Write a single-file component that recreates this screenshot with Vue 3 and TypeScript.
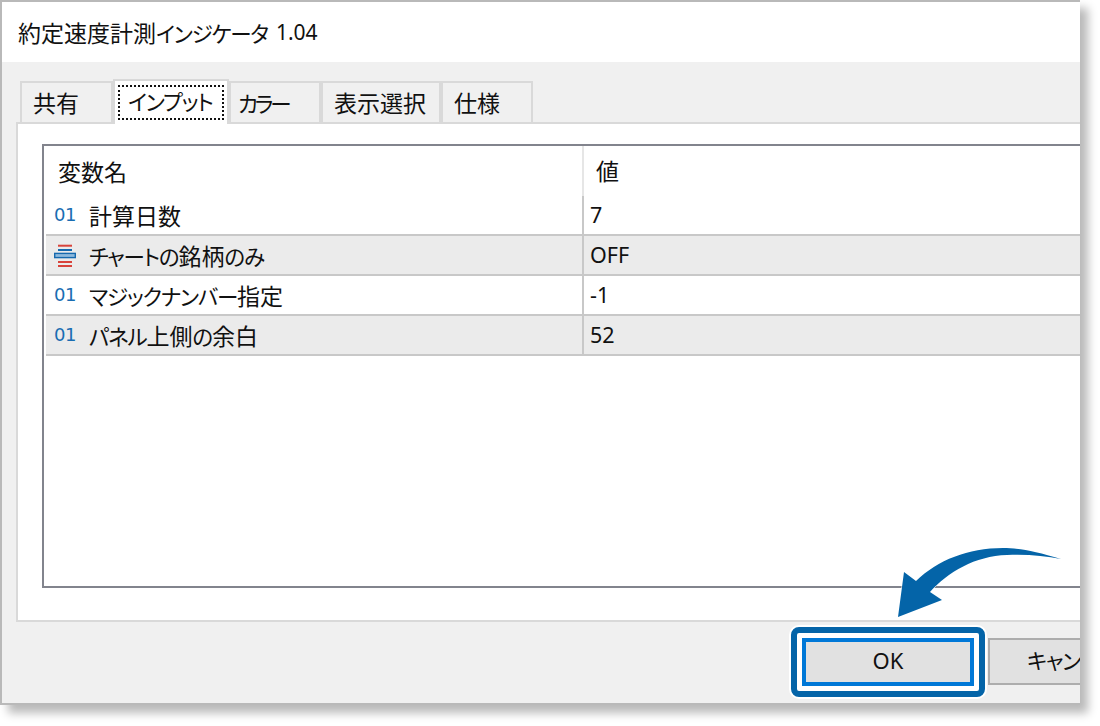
<script setup lang="ts">
interface Row { icon: 'num' | 'enum'; name: string; value: string }
interface Run { text: string; kana: boolean }

const splitRuns = (s: string): Run[] =>
  (s.match(/[\u3040-\u30ff]+|[^\u3040-\u30ff]+/g) ?? []).map((text) => ({
    text,
    kana: /[\u3040-\u30ff]/.test(text),
  }))

const tabs = [
  { label: '共有', w: 93, active: false, tight: false },
  { label: 'インプット', w: 116, active: true, tight: false },
  { label: 'カラー', w: 92, active: false, tight: true },
  { label: '表示選択', w: 120, active: false, tight: false },
  { label: '仕様', w: 92, active: false, tight: false },
].map((t) => ({ ...t, runs: splitRuns(t.label) }))

const rows: Row[] = [
  { icon: 'num', name: '計算日数', value: '7' },
  { icon: 'enum', name: 'チャートの銘柄のみ', value: 'OFF' },
  { icon: 'num', name: 'マジックナンバー指定', value: '-1' },
  { icon: 'num', name: 'パネル上側の余白', value: '52' },
]
const rowRuns = rows.map((r) => ({ ...r, runs: splitRuns(r.name) }))
const titleRuns = splitRuns('約定速度計測インジケータ')
const cancelRuns = splitRuns('キャンセル')
</script>

<template>
  <div class="page">
    <div class="window">
      <div class="title">
        <span class="jp"><span v-for="(x, i) in titleRuns" :key="i" :class="{ kana: x.kana }">{{ x.text }}</span></span>
        <span class="ver">1.04</span>
      </div>
      <div class="body">
        <div class="tabs">
          <div
            v-for="t in tabs"
            :key="t.label"
            class="tab jp"
            :class="{ active: t.active, tight: t.tight }"
            :style="{ width: t.w + 'px' }"
          >
            <span class="tab-label"><span v-for="(x, i) in t.runs" :key="i" :class="{ kana: x.kana }">{{ x.text }}</span></span>
          </div>
        </div>
        <div class="panel">
          <div class="list">
            <div class="row head">
              <div class="c1 head-name jp">変数名</div>
              <div class="c2 head-val jp">値</div>
            </div>
            <div
              v-for="(r, n) in rowRuns"
              :key="r.name"
              class="row item"
              :class="{ alt: n % 2 === 1 }"
            >
              <div class="c1">
                <span v-if="r.icon === 'num'" class="num">01</span>
                <svg v-else class="enum" width="22" height="28" viewBox="0 0 22 28">
                  <rect x="4" y="3.7" width="14" height="2" fill="#d8433b" />
                  <rect x="4" y="8" width="14" height="2" fill="#1669ae" />
                  <rect x="0.7" y="12.4" width="20.6" height="4.2" fill="#8db9dc" stroke="#1669ae" stroke-width="1.4" />
                  <rect x="4" y="20" width="14" height="2" fill="#d8433b" />
                  <rect x="4" y="24" width="14" height="2" fill="#d8433b" />
                </svg>
                <span class="name jp"><span v-for="(x, i) in r.runs" :key="i" :class="{ kana: x.kana }">{{ x.text }}</span></span>
              </div>
              <div class="c2">{{ r.value }}</div>
            </div>
          </div>
        </div>
        <div class="footer">
          <div class="ring">
            <button class="btn ok" type="button">OK</button>
          </div>
          <button class="btn cancel jp" type="button"><span v-for="(x, i) in cancelRuns" :key="i" :class="{ kana: x.kana }">{{ x.text }}</span></button>
        </div>
      </div>
      <svg class="arrow" width="180" height="90" viewBox="890 540 180 90">
        <path
          d="M1061 559 C1035 551 1018 548 1003 548 C968 548 938 560 916 581 L904 572 L898 617 L942 600 L930 592 C948 572 975 556 1007 555 C1027 554 1045 556 1061 559 Z"
          fill="#0464a8"
          stroke="#fff"
          stroke-width="1"
          stroke-linejoin="round"
          paint-order="stroke"
        />
      </svg>
    </div>
  </div>
</template>

<style scoped>
.page {
  width: 1100px;
  height: 726px;
  overflow: hidden;
  font-family: "Noto Sans", "Noto Sans CJK JP", sans-serif;
  color: #111;
  background: #fff;
}
.jp {
  font-family: "Noto Sans CJK JP", sans-serif;
  font-size: 23px;
  font-feature-settings: "palt";
}
.kana {
  font-size: 21.5px;
  letter-spacing: -1.2px;
}
.tab.tight .kana {
  letter-spacing: -3px;
}
.window {
  position: relative;
  width: 1080px;
  height: 705px;
  box-sizing: border-box;
  border: solid #b9b9b9;
  border-width: 2px 0 2px 2px;
  box-shadow: 8px 8px 9px rgba(0, 0, 0, 0.28);
  background: #fff;
  display: flex;
  flex-direction: column;
}
.title {
  height: 60px;
  flex: none;
  display: flex;
  align-items: center;
  padding: 0 0 1px 16px;
  box-sizing: border-box;
  background: #fff;
  white-space: nowrap;
}
.ver {
  margin-left: 8px;
  font-size: 21px;
}
.body {
  flex: 1;
  min-height: 0;
  background: #f0f0f0;
  display: flex;
  flex-direction: column;
  overflow: hidden;
}
.tabs {
  display: flex;
  align-items: flex-end;
  height: 60px;
  flex: none;
  padding-left: 18px;
}
.tab {
  box-sizing: border-box;
  height: 41px;
  border: 2px solid #d9d9d9;
  border-bottom: none;
  padding: 1px 0 0 11px;
  line-height: 36px;
  white-space: nowrap;
  position: relative;
}
.tab.tight {
  padding-left: 7px;
}
.tab.active {
  height: 45px;
  background: #fff;
  margin-bottom: -2px;
  z-index: 1;
  padding: 4px 3px 0;
}
.tab.active .tab-label {
  display: block;
  height: 35px;
  padding-left: 8px;
  line-height: 26px;
  border: 2px dotted #111;
  box-sizing: border-box;
}
.panel {
  flex: none;
  box-sizing: border-box;
  height: 500px;
  margin-left: 14px;
  padding: 20px 0 0 24px;
  background: #fff;
  border: solid #d9d9d9;
  border-width: 2px 0 2px 2px;
}
.list {
  box-sizing: border-box;
  height: 444px;
  margin-right: -2px;
  border: solid #82848d;
  border-width: 2px 0 2px 2px;
  padding-left: 2px;
  font-size: 21.5px;
}
.row {
  display: flex;
}
.head {
  height: 50px;
  line-height: 48px;
}
.item {
  height: 40px;
  box-sizing: border-box;
  border-bottom: 2px solid #c8c8c8;
  line-height: 38px;
}
.item.alt {
  background: #ebebeb;
}
.c1 {
  width: 538px;
  flex: none;
  box-sizing: border-box;
  display: flex;
  align-items: center;
  padding-left: 8px;
  border-right: 2px solid #c8c8c8;
  white-space: nowrap;
}
.head-name {
  padding-left: 12px;
  border-right-color: #e6e6e6;
}
.c2 {
  flex: 1;
  padding-left: 6px;
}
.head-val {
  padding-left: 12px;
}
.num {
  width: 35px;
  flex: none;
  color: #1a6db2;
  font-family: "DejaVu Sans", sans-serif;
  font-size: 18px;
  letter-spacing: -0.5px;
}
.enum {
  width: 22px;
  flex: none;
  margin-right: 13px;
}
.footer {
  flex: 1;
  display: flex;
  align-items: flex-start;
  padding: 5px 0 0 789px;
  gap: 3px;
}
.ring {
  flex: none;
  width: 194px;
  height: 70px;
  box-sizing: border-box;
  border: 6px solid #0464a8;
  border-radius: 8px;
  padding: 5px;
  background: #fff;
  box-shadow: 0 0 0 2px #fff;
}
.btn {
  display: block;
  margin: 0;
  font-family: inherit;
  font-size: 22px;
  color: #111;
  background: #e1e1e1;
  box-sizing: border-box;
  white-space: nowrap;
  padding: 0 0 5px;
}
.ok {
  width: 172px;
  height: 48px;
  border: 4px solid #0078d7;
}
.cancel {
  flex: none;
  width: 170px;
  height: 47px;
  margin-top: 11px;
  border: 2px solid #adadad;
  text-align: left;
  padding-left: 37px;
  font-family: "Noto Sans CJK JP", sans-serif;
  font-size: 23px;
}
.arrow {
  position: absolute;
  left: 888px;
  top: 538px;
  z-index: 2;
}
</style>
